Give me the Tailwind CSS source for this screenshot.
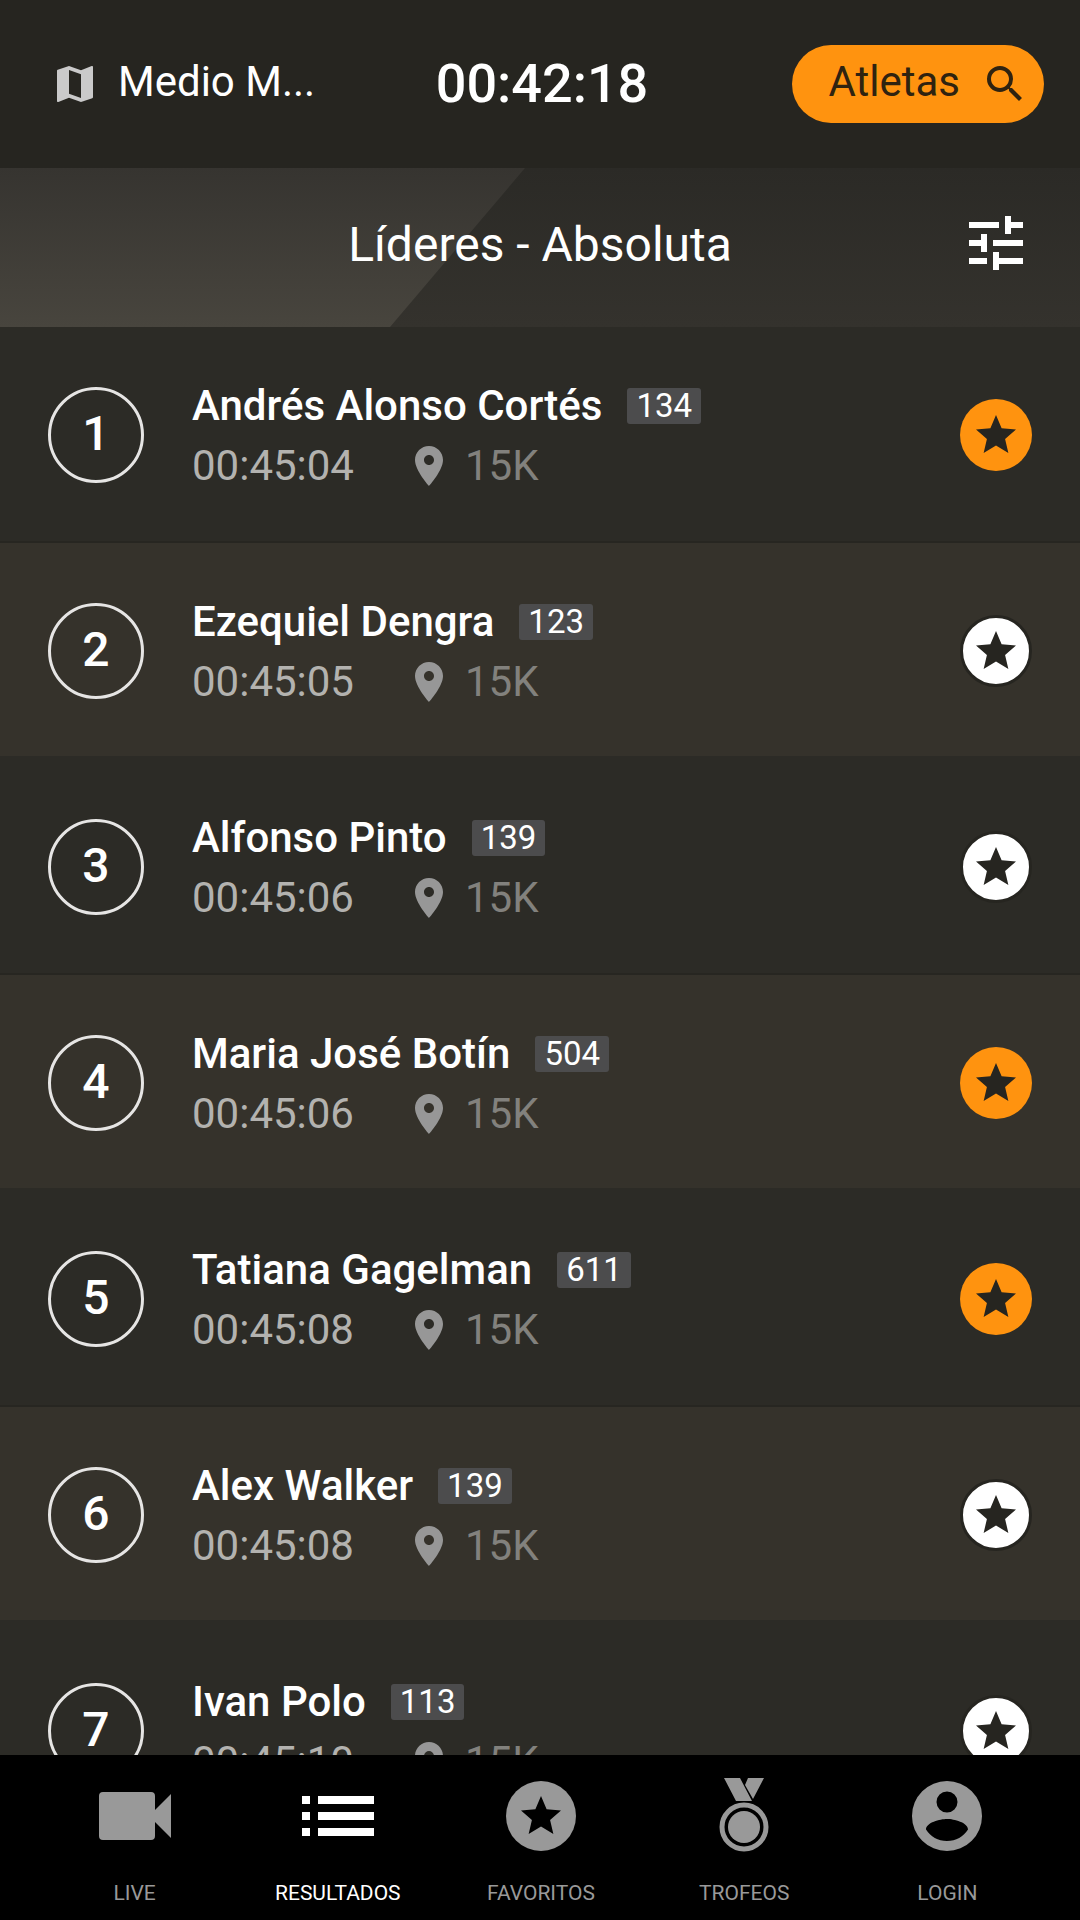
<!DOCTYPE html>
<html lang="es">
<head>
    <meta charset="utf-8">
    <meta name="viewport" content="width=device-width, initial-scale=1">
    <title>Líderes - Absoluta</title>
    <script src="https://cdn.jsdelivr.net/npm/@tailwindcss/browser@4"></script>
</head>
<body class="bg-[#2c2b26] text-white font-[Roboto,sans-serif]">
    <!-- Shared icons -->
    <svg class="hidden">
        <symbol id="star" viewBox="0 0 24 24">
            <path d="M12 17.27L18.18 21l-1.64-7.03L22 9.24l-7.19-.61L12 2 9.19 8.63 2 9.24l5.46 4.73L5.82 21z"/>
        </symbol>
        <symbol id="pin" viewBox="0 0 24 24">
            <path d="M12 2C8.13 2 5 5.13 5 9c0 5.25 7 13 7 13s7-7.75 7-13c0-3.87-3.13-7-7-7zm0 9.5c-1.38 0-2.5-1.12-2.5-2.5s1.12-2.5 2.5-2.5 2.5 1.12 2.5 2.5-1.12 2.5-2.5 2.5z"/>
        </symbol>
    </svg>

    <div class="h-screen flex flex-col">
        <header class="h-42 shrink-0 grid grid-cols-[1fr_auto_1fr] items-center pl-10 pr-9 bg-[#262520]">
            <button class="justify-self-start flex items-center gap-[19px] pl-[11px] text-[42px] leading-12">
                <svg class="size-12 fill-[#cacaca]" viewBox="0 0 24 24"><path d="M20.5 3l-.16.03L15 5.1 9 3 3.36 4.9c-.21.07-.36.25-.36.48V20.5c0 .28.22.5.5.5l.16-.03L9 18.9l6 2.1 5.64-1.9c.21-.07.36-.25.36-.48V3.5c0-.28-.22-.5-.5-.5zM15 19l-6-2.11V5l6 2.11V19z"/></svg>
                <span class="pb-1">Medio M...</span>
            </button>
            <time class="text-[54px] leading-16 font-medium">00:42:18</time>
            <button class="justify-self-end h-[78px] flex items-center gap-[21px] pl-9 pr-[15px] rounded-full bg-[#ff930f] text-[#2f2310] text-[42px] leading-12">
                <span class="pb-1">Atletas</span>
                <svg class="size-12 fill-[#2f2310]" viewBox="0 0 24 24"><path d="M15.5 14h-.79l-.28-.27A6.47 6.47 0 0 0 16 9.5 6.5 6.5 0 1 0 9.5 16c1.61 0 3.09-.59 4.23-1.57l.27.28v.79l5 4.99L20.49 19l-4.99-5zm-6 0C7.01 14 5 11.99 5 9.5S7.01 5 9.5 5 14 7.01 14 9.5 11.99 14 9.5 14z"/></svg>
            </button>
        </header>

        <section class="relative h-[159px] shrink-0 grid grid-cols-[1fr_auto_1fr] items-center px-12 bg-linear-to-b from-[#2b2a26] to-[#34322d]">
            <div class="absolute inset-y-0 left-0 w-[525px] bg-linear-to-b from-[#363430] to-[#48453e] [clip-path:polygon(0_0,100%_0,390px_100%,0_100%)]"></div>
            <h1 class="relative col-start-2 pb-1.5 text-[48px] leading-14">Líderes - Absoluta</h1>
            <button class="justify-self-end pb-2.5" aria-label="Filtros">
                <svg class="size-[72px] fill-white" viewBox="0 0 24 24"><path d="M3 17v2h6v-2H3zM3 5v2h10V5H3zm10 16v-2h8v-2h-8v-2h-2v6h2zM7 9v2H3v2h4v2h2V9H7zm14 4v-2H11v2h10zm-6-4h2V7h4V5h-4V3h-2v6z"/></svg>
            </button>
        </section>

        <main class="flex-1 min-h-0 overflow-hidden">
            <ol id="leaders"></ol>
        </main>

        <nav class="h-[165px] shrink-0 grid grid-cols-5 pl-[33px] pr-[31px] bg-black text-[#999] text-[21px] leading-6 text-center">
            <a href="#live" class="flex flex-col items-center pt-[13px]">
                <svg class="size-24 fill-[#999]" viewBox="0 0 24 24"><path d="M17 10.5V7a1 1 0 0 0-1-1H4a1 1 0 0 0-1 1v10a1 1 0 0 0 1 1h12a1 1 0 0 0 1-1v-3.5l4 4v-11l-4 4z"/></svg>
                <span class="pt-[17px]">LIVE</span>
            </a>
            <a href="#resultados" class="flex flex-col items-center pt-[13px] text-white">
                <svg class="size-24 fill-white" viewBox="0 0 24 24"><path d="M3 13h2v-2H3v2zm0 4h2v-2H3v2zm0-8h2V7H3v2zm4 4h14v-2H7v2zm0 4h14v-2H7v2zM7 7v2h14V7H7z"/></svg>
                <span class="pt-[17px]">RESULTADOS</span>
            </a>
            <a href="#favoritos" class="flex flex-col items-center pt-[13px]">
                <svg class="size-24 fill-[#999]" viewBox="0 0 96 96">
                    <circle cx="48" cy="48" r="35"/>
                    <use href="#star" x="24" y="24" width="48" height="48" class="fill-black"/>
                </svg>
                <span class="pt-[17px]">FAVORITOS</span>
            </a>
            <a href="#trofeos" class="flex flex-col items-center pt-[13px]">
                <svg class="size-24 fill-[#999]" viewBox="0 0 96 96">
                    <path d="M28 10h16l12 23H40zM52 10h16L57 31l-8-14z"/>
                    <circle cx="48" cy="59" r="22" fill="none" stroke="#999" stroke-width="5"/>
                    <circle cx="48" cy="59" r="16"/>
                </svg>
                <span class="pt-[17px]">TROFEOS</span>
            </a>
            <a href="#login" class="flex flex-col items-center pt-[13px]">
                <svg class="size-24 fill-[#999]" viewBox="0 0 96 96"><path fill-rule="evenodd" d="M48 13a35 35 0 1 0 0 70a35 35 0 1 0 0-70zM48 23.500a10.500 10.500 0 1 1 0 21a10.500 10.500 0 1 1 0-21zM48 73c-9 0-16.500-4.500-21-11.500c0-7 14-10.500 21-10.500s21 3.500 21 10.500c-4.500 7-12 11.500-21 11.500z"/></svg>
                <span class="pt-[17px]">LOGIN</span>
            </a>
        </nav>
    </div>

    <script>
        const leaders = [
            { name: 'Andrés Alonso Cortés', bib: 134, time: '00:45:04', fav: true },
            { name: 'Ezequiel Dengra', bib: 123, time: '00:45:05', fav: false },
            { name: 'Alfonso Pinto', bib: 139, time: '00:45:06', fav: false },
            { name: 'Maria José Botín', bib: 504, time: '00:45:06', fav: true },
            { name: 'Tatiana Gagelman', bib: 611, time: '00:45:08', fav: true },
            { name: 'Alex Walker', bib: 139, time: '00:45:08', fav: false },
            { name: 'Ivan Polo', bib: 113, time: '00:45:10', fav: false }
        ];

        // The separator is an inset shadow so every row keeps the same height
        document.getElementById('leaders').innerHTML = leaders.map((r, i) => `
            <li class="h-54 flex items-center px-12 ${i % 2 ? 'bg-[#35322b] shadow-[inset_0_-3px_0_#2c2b26]' : 'bg-[#2c2b26] shadow-[inset_0_-2px_0_#272621]'}">
                <div class="size-24 shrink-0 flex items-center justify-center pb-0.5 rounded-full border-3 border-[#e6e5e4] text-[48px] leading-none font-medium">${i + 1}</div>
                <div class="flex-1 min-w-0 pl-12 pt-0.5">
                    <div class="flex items-center gap-[25px]">
                        <h2 class="text-[42px] leading-15 font-medium">${r.name}</h2>
                        <span class="h-9 px-[9px] rounded-[3px] bg-[#4c4c4d] text-[33px] leading-9">${r.bib}</span>
                    </div>
                    <div class="flex items-center text-[42px] leading-15">
                        <time class="text-[#b3b2af]">${r.time}</time>
                        <svg class="size-12 ml-[51px] mr-3 fill-[#979797]"><use href="#pin"/></svg>
                        <span class="text-[#82817d]">15K</span>
                    </div>
                </div>
                <button class="size-[72px] shrink-0 flex items-center justify-center rounded-full ${r.fav ? 'bg-[#ff930f]' : 'bg-white border-3 border-[#262520]'}" aria-label="Favorito">
                    <svg class="size-12 fill-[#262520]"><use href="#star"/></svg>
                </button>
            </li>`).join('');
    </script>
</body>
</html>
